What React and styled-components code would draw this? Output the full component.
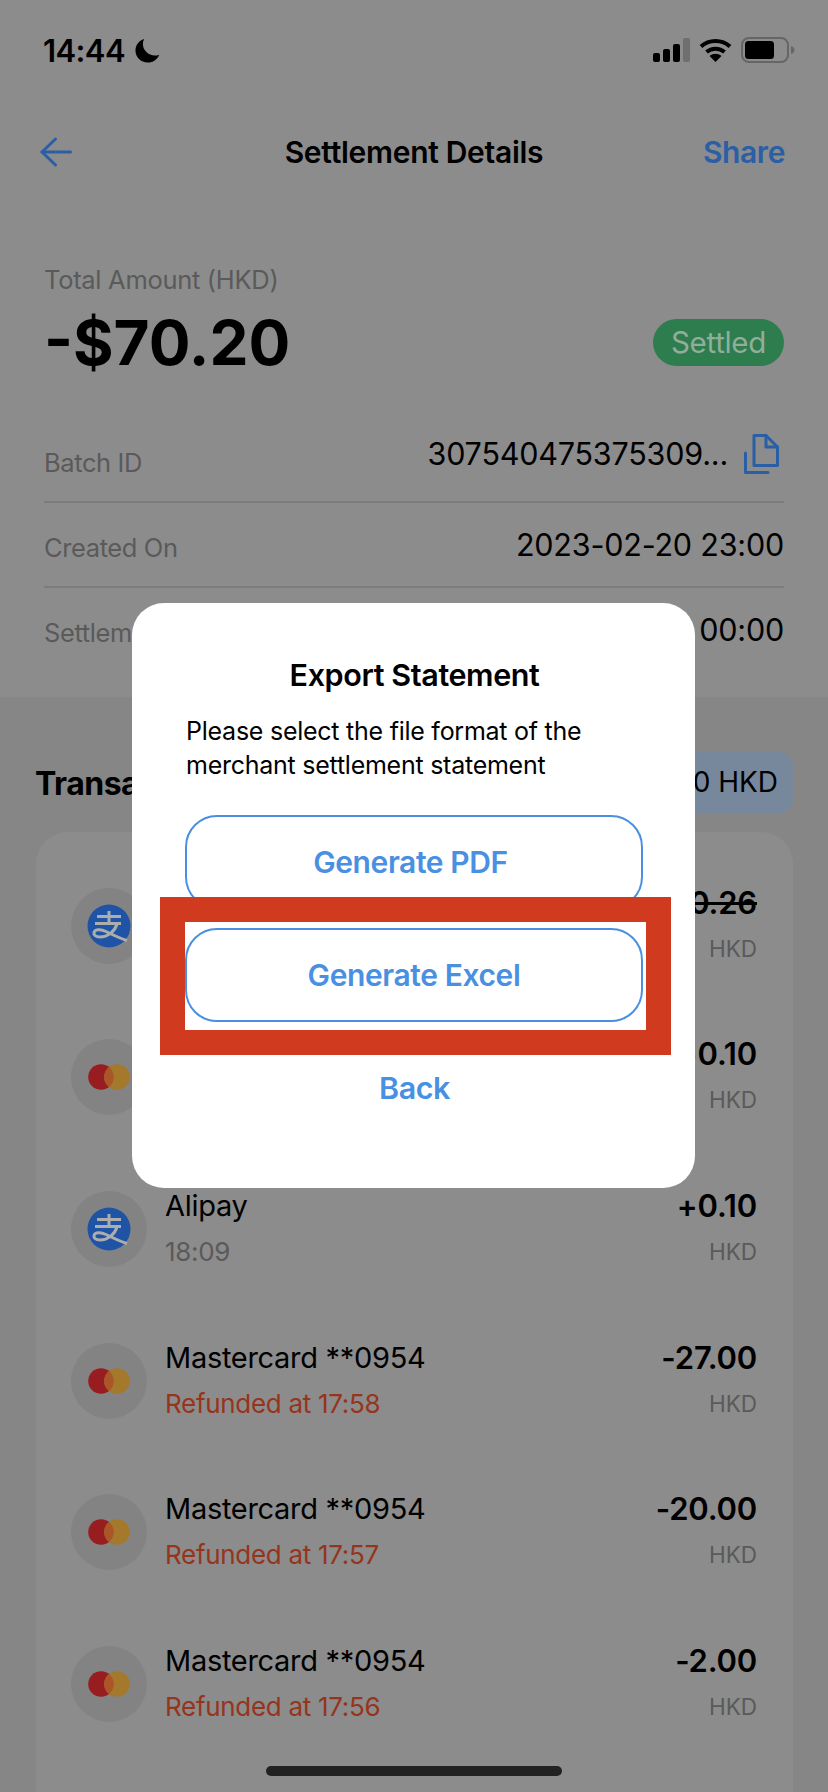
import React from 'react';
import styled, { createGlobalStyle } from 'styled-components';

const GlobalStyle = createGlobalStyle`
  html, body { margin: 0; padding: 0; background: #8c8c8c; }
  * { box-sizing: border-box; }
`;

const transactions = [
  { id: 1, type: 'alipay', name: 'Alipay', sub: '18:12', amount: '+0.26', struck: true },
  { id: 2, type: 'master', name: 'Mastercard **0954', sub: '18:10', amount: '+0.10' },
  { id: 3, type: 'alipay', name: 'Alipay', sub: '18:09', amount: '+0.10' },
  { id: 4, type: 'master', name: 'Mastercard **0954', sub: 'Refunded at 17:58', refund: true, amount: '-27.00' },
  { id: 5, type: 'master', name: 'Mastercard **0954', sub: 'Refunded at 17:57', refund: true, amount: '-20.00' },
  { id: 6, type: 'master', name: 'Mastercard **0954', sub: 'Refunded at 17:56', refund: true, amount: '-2.00' },
];

function SignalIcon() {
  return (
    <svg width="37" height="24" viewBox="0 0 37 24">
      <rect x="0" y="15" width="7" height="9" rx="2" fill="#000" />
      <rect x="10" y="11" width="7" height="13" rx="2" fill="#000" />
      <rect x="20" y="6" width="7" height="18" rx="2" fill="#000" />
      <rect x="30" y="0" width="7" height="24" rx="2" fill="#6f6f6f" />
    </svg>
  );
}

function WifiIcon() {
  return (
    <svg width="33" height="24" viewBox="0 0 33 24" fill="none" stroke="#000" strokeWidth="4">
      <path d="M2 8.5C10 1 23 1 31 8.5" />
      <path d="M7.5 14C12.5 9.5 20.5 9.5 25.5 14" />
      <path d="M16.5 24L10.5 18C14 15 19 15 22.5 18Z" fill="#000" stroke="none" />
    </svg>
  );
}

function BatteryIcon() {
  return (
    <svg width="54" height="26" viewBox="0 0 54 26" fill="none">
      <rect x="1" y="1" width="46" height="24" rx="7" stroke="#666" strokeWidth="2" />
      <rect x="4" y="4" width="29" height="18" rx="3.5" fill="#000" />
      <path d="M50 9C52.5 10 53.5 11.5 53.5 13S52.5 16 50 17Z" fill="#666" />
    </svg>
  );
}

function MoonIcon() {
  return (
    <svg width="25" height="25" viewBox="0 0 26 26">
      <path d="M9.5 1C3.8 3 0.5 7.5 0.5 13c0 7 5.6 12.5 12.7 12.5 5.5 0 10-3.2 12-8.2-1.6.6-3 .9-4.7.9C13.8 18.2 8.2 12.8 8.2 6.3 8.2 4.4 8.6 2.6 9.5 1Z" fill="#000" />
    </svg>
  );
}

function BackArrow() {
  return (
    <svg width="32" height="30" viewBox="0 0 32 30" fill="none" stroke="#2a5fa5" strokeWidth="3" strokeLinecap="round" strokeLinejoin="round">
      <path d="M15.5 2L2 15l13.5 13" />
      <path d="M2 15h28.5" />
    </svg>
  );
}

function CopyIcon() {
  return (
    <svg width="35" height="40" viewBox="0 0 35 40" fill="none" stroke="#2a5fa5" strokeWidth="3" strokeLinejoin="round" strokeLinecap="round">
      <path d="M10 1.5H22L33.5 13V31.5H10Z" />
      <path d="M22 1.5V13H33.5" />
      <path d="M1.5 19V38.5H24" />
    </svg>
  );
}

function AlipayLogo() {
  return (
    <svg width="44" height="44" viewBox="0 0 44 44" fill="none">
      <circle cx="22" cy="22" r="21.5" fill="#1f53a5" />
      <g stroke="#adadad" strokeWidth="3">
        <path d="M10 12.5h24" />
        <path d="M22 7v12" />
        <path d="M8 19.5h26" />
        <path d="M30 20c-2 7-9 13-17 13-4.500 0-6.500-2-6-4.500 .6-3 6-4 12-1 6 3 13 6.500 21 9" />
      </g>
    </svg>
  );
}

function MastercardLogo() {
  return (
    <svg width="42" height="26" viewBox="0 0 42 26">
      <circle cx="13" cy="13" r="12.8" fill="#981d20" />
      <circle cx="29" cy="13" r="12.8" fill="#a5792b" />
      <path d="M21 3a12.8 12.8 0 0 1 0 20a12.8 12.8 0 0 1 0-20Z" fill="#aa5628" />
    </svg>
  );
}

export default function App() {
  return (
    <Page>
      <GlobalStyle />
      <TopSection>
        <StatusBar>
          <Clock>14:44</Clock>
          <MoonWrap><MoonIcon /></MoonWrap>
          <StatusIcons>
            <SignalIcon />
            <WifiIcon />
            <BatteryIcon />
          </StatusIcons>
        </StatusBar>
        <NavBar>
          <BackArrow />
          <NavTitle>Settlement Details</NavTitle>
          <ShareLink>Share</ShareLink>
        </NavBar>
        <Summary>
          <TotalLabel>Total Amount (HKD)</TotalLabel>
          <AmountRow>
            <TotalAmount>-$70.20</TotalAmount>
            <StatusPill>Settled</StatusPill>
          </AmountRow>
          <InfoList>
            <InfoRow>
              <InfoLabel>Batch ID</InfoLabel>
              <InfoValue $lift={5} $inset={5}>
                307540475375309...
                <CopyIcon />
              </InfoValue>
            </InfoRow>
            <InfoRow>
              <InfoLabel>Created On</InfoLabel>
              <InfoValue $lift={1}>2023-02-20 23:00</InfoValue>
            </InfoRow>
            <InfoRow $last>
              <InfoLabel>Settlement Time</InfoLabel>
              <InfoValue $lift={1}>2023-02-21 00:00</InfoValue>
            </InfoRow>
          </InfoList>
        </Summary>
      </TopSection>

      <TransactionsSection>
        <SectionHead>
          <SectionTitle>Transactions</SectionTitle>
          <TotalPill>-70.20 HKD</TotalPill>
        </SectionHead>
        <Card>
          {transactions.map((t) => (
            <TxRow key={t.id}>
              <TxIcon>{t.type === 'alipay' ? <AlipayLogo /> : <MastercardLogo />}</TxIcon>
              <TxText>
                <TxName>{t.name}</TxName>
                <TxSub $refund={t.refund}>{t.sub}</TxSub>
              </TxText>
              <TxAmounts>
                <TxAmount $struck={t.struck}>{t.amount}</TxAmount>
                <TxCurrency>HKD</TxCurrency>
              </TxAmounts>
            </TxRow>
          ))}
        </Card>
      </TransactionsSection>

      <HomeIndicator />

      <Modal>
        <ModalTitle>Export Statement</ModalTitle>
        <ModalText>Please select the file format of the merchant settlement statement</ModalText>
        <ModalActions>
          <OutlineButton $nudge={7}>Generate PDF</OutlineButton>
          <OutlineButton>Generate Excel</OutlineButton>
        </ModalActions>
        <BackButton>Back</BackButton>
      </Modal>
      <Highlight />
    </Page>
  );
}

const Page = styled.div`
  position: relative;
  width: 828px;
  height: 1792px;
  overflow: hidden;
  background: #868686;
  color: #000;
  font-family: Inter, "Liberation Sans", sans-serif;
`;

const TopSection = styled.div`
  height: 697px;
  background: #8c8c8c;
`;

const StatusBar = styled.div`
  height: 100px;
  display: flex;
  align-items: center;
  padding: 0 33px 0 43px;
`;

const Clock = styled.span`
  font-size: 31px;
  font-weight: 600;
  letter-spacing: -0.6px;
`;

const MoonWrap = styled.span`
  display: flex;
  margin-left: 10px;
`;

const StatusIcons = styled.div`
  display: flex;
  align-items: center;
  gap: 9px;
  margin-left: auto;
`;

const NavBar = styled.div`
  height: 104px;
  display: flex;
  align-items: center;
  justify-content: space-between;
  padding: 0 43px 0 40px;
`;

const NavTitle = styled.div`
  font-size: 30px;
  font-weight: 600;
  letter-spacing: -0.3px;
  margin-left: 53px;
`;

const ShareLink = styled.div`
  font-size: 30px;
  font-weight: 600;
  letter-spacing: -0.4px;
  color: #2a5fa5;
`;

const Summary = styled.div`
  padding: 60px 44px 0;
`;

const TotalLabel = styled.div`
  font-size: 25.5px;
  line-height: 32px;
  letter-spacing: -0.3px;
  color: #5a5a5a;
`;

const AmountRow = styled.div`
  display: flex;
  align-items: center;
  justify-content: space-between;
  height: 60px;
  margin-top: 16px;
`;

const TotalAmount = styled.div`
  font-size: 62px;
  font-weight: 700;
`;

const StatusPill = styled.div`
  width: 131px;
  height: 47px;
  border-radius: 24px;
  background: #2e7d4e;
  color: #93ad9b;
  font-size: 29.5px;
  line-height: 47px;
  text-align: center;
  letter-spacing: -0.3px;
`;

const InfoList = styled.div`
  margin-top: 46px;
`;

const InfoRow = styled.div`
  height: 85px;
  display: flex;
  align-items: flex-end;
  justify-content: space-between;
  padding-bottom: 22px;
  border-bottom: 2px solid ${(p) => (p.$last ? 'transparent' : '#7c7c7c')};
`;

const InfoLabel = styled.div`
  font-size: 25.5px;
  line-height: 32px;
  letter-spacing: -0.4px;
  color: #5a5a5a;
`;

const InfoValue = styled.div`
  display: flex;
  align-items: center;
  gap: 16px;
  font-size: 30.5px;
  line-height: 36px;
  letter-spacing: -0.2px;
  margin-bottom: ${(p) => p.$lift}px;
  margin-right: ${(p) => p.$inset || 0}px;
`;

const TransactionsSection = styled.div`
  padding: 55px 35px 0 36px;
`;

const SectionHead = styled.div`
  display: flex;
  align-items: center;
  justify-content: space-between;
  height: 61px;
`;

const SectionTitle = styled.div`
  font-size: 32px;
  font-weight: 700;
  letter-spacing: -0.5px;
  padding-top: 2px;
  margin-left: -1px;
`;

const TotalPill = styled.div`
  height: 61px;
  padding: 0 15px;
  border-radius: 14px;
  background: #77889d;
  font-size: 28px;
  line-height: 61px;
`;

const Card = styled.div`
  margin-top: 19px;
  padding: 18px 36px 0 35px;
  height: 1000px;
  border-radius: 32px;
  background: #8c8c8c;
`;

const TxRow = styled.div`
  height: 151.6px;
  display: flex;
  align-items: center;
`;

const TxIcon = styled.div`
  width: 76px;
  height: 76px;
  flex: none;
  display: flex;
  align-items: center;
  justify-content: center;
  border-radius: 50%;
  background: #838383;
`;

const TxText = styled.div`
  display: flex;
  flex-direction: column;
  gap: 10px;
  margin-left: 18px;
`;

const TxName = styled.div`
  font-size: 29px;
  line-height: 36px;
  letter-spacing: -0.3px;
`;

const TxSub = styled.div`
  font-size: 26px;
  line-height: 36px;
  letter-spacing: -0.3px;
  color: ${(p) => (p.$refund ? '#96341c' : '#5a5a5a')};
`;

const TxAmounts = styled.div`
  display: flex;
  flex-direction: column;
  align-items: flex-end;
  gap: 10px;
  margin-left: auto;
`;

const TxAmount = styled.div`
  font-size: 31px;
  font-weight: 600;
  line-height: 36px;
  letter-spacing: -0.2px;
  text-decoration: ${(p) => (p.$struck ? 'line-through' : 'none')};
`;

const TxCurrency = styled.div`
  font-size: 22.5px;
  line-height: 36px;
  color: #5a5a5a;
`;

const HomeIndicator = styled.div`
  position: absolute;
  left: 266px;
  top: 1766px;
  width: 296px;
  height: 10px;
  border-radius: 5px;
  background: #222;
`;

const Modal = styled.div`
  position: absolute;
  left: 132px;
  top: 603px;
  width: 563px;
  height: 585px;
  padding: 54px 52px 0 54px;
  border-radius: 32px;
  background: #fff;
`;

const ModalTitle = styled.div`
  font-size: 30.5px;
  font-weight: 600;
  line-height: 36px;
  letter-spacing: -0.4px;
  text-align: center;
`;

const ModalText = styled.div`
  margin-top: 21px;
  font-size: 25px;
  line-height: 34px;
  letter-spacing: -0.25px;
`;

const ModalActions = styled.div`
  display: flex;
  flex-direction: column;
  gap: 19px;
  margin-top: 33px;
  margin-left: -1px;
`;

const OutlineButton = styled.div`
  height: 94px;
  padding-right: ${(p) => p.$nudge || 0}px;
  border: 2px solid #4a90e2;
  border-radius: 32px;
  color: #4a90e2;
  font-size: 30px;
  font-weight: 600;
  line-height: 90px;
  letter-spacing: -0.4px;
  text-align: center;
`;

const BackButton = styled.div`
  margin-top: 48px;
  color: #4a90e2;
  font-size: 30.5px;
  font-weight: 600;
  line-height: 36px;
  letter-spacing: -0.4px;
  text-align: center;
`;

const Highlight = styled.div`
  position: absolute;
  left: 160px;
  top: 897px;
  width: 511px;
  height: 158px;
  border: 25px solid #d03a1e;
`;
